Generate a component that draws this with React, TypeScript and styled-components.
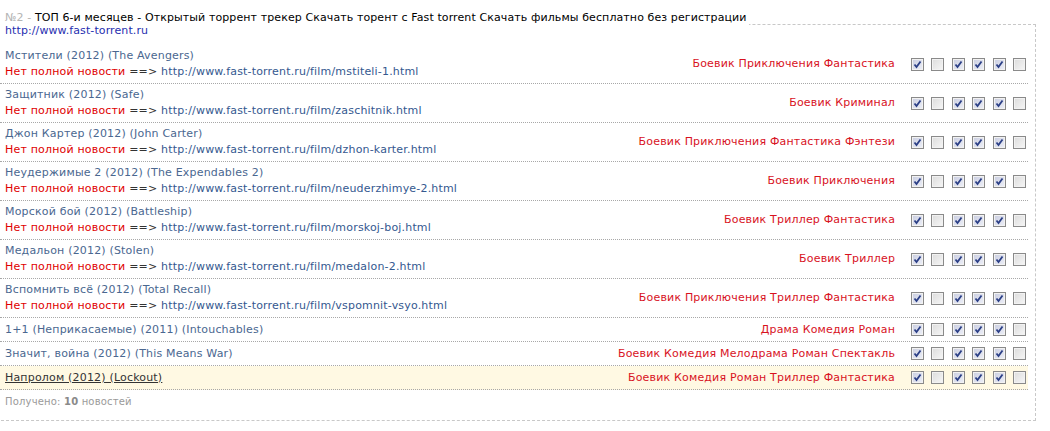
import React from 'react'
import styled, { createGlobalStyle } from 'styled-components'

interface Film {
  title: string
  url?: string
  genres: string
}

const films: Film[] = [
  { title: 'Мстители (2012) (The Avengers)', url: 'http://www.fast-torrent.ru/film/mstiteli-1.html', genres: 'Боевик Приключения Фантастика' },
  { title: 'Защитник (2012) (Safe)', url: 'http://www.fast-torrent.ru/film/zaschitnik.html', genres: 'Боевик Криминал' },
  { title: 'Джон Картер (2012) (John Carter)', url: 'http://www.fast-torrent.ru/film/dzhon-karter.html', genres: 'Боевик Приключения Фантастика Фэнтези' },
  { title: 'Неудержимые 2 (2012) (The Expendables 2)', url: 'http://www.fast-torrent.ru/film/neuderzhimye-2.html', genres: 'Боевик Приключения' },
  { title: 'Морской бой (2012) (Battleship)', url: 'http://www.fast-torrent.ru/film/morskoj-boj.html', genres: 'Боевик Триллер Фантастика' },
  { title: 'Медальон (2012) (Stolen)', url: 'http://www.fast-torrent.ru/film/medalon-2.html', genres: 'Боевик Триллер' },
  { title: 'Вспомнить всё (2012) (Total Recall)', url: 'http://www.fast-torrent.ru/film/vspomnit-vsyo.html', genres: 'Боевик Приключения Триллер Фантастика' },
  { title: '1+1 (Неприкасаемые) (2011) (Intouchables)', genres: 'Драма Комедия Роман' },
  { title: 'Значит, война (2012) (This Means War)', genres: 'Боевик Комедия Мелодрама Роман Спектакль' },
  { title: 'Напролом (2012) (Lockout)', genres: 'Боевик Комедия Роман Триллер Фантастика' },
]

const flags = [true, false, true, true, true, false]

const GlobalStyle = createGlobalStyle`
  body {
    margin: 0;
    background: #fff;
    font-family: "DejaVu Sans", Verdana, sans-serif;
    font-size: 11px;
    letter-spacing: 0.18px;
  }
`

const Fieldset = styled.fieldset`
  margin: 11px 14px 0 -4px;
  padding: 8px 7px 11px 3px;
  border: 1px dashed #c8c8c8;
  min-width: 0;
`

const Legend = styled.legend`
  padding: 0 2px 0 5px;
  font: 11px/13px "DejaVu Sans", Verdana, sans-serif;
  letter-spacing: 0.1px;
  color: #000;
`

const Num = styled.span`
  color: #b4b4b4;
`

const SiteLink = styled.a`
  color: #1f2fb0;
  text-decoration: none;
`

const List = styled.div`
  display: flex;
  flex-direction: column;
`

const Row = styled.div<{ $hover?: boolean }>`
  display: flex;
  align-items: center;
  padding: 3px 2px 3px 5px;
  border-bottom: 1px dotted #a8a8a8;
  line-height: 16px;
  background: ${p => (p.$hover ? '#fff9e3' : 'transparent')};
`

const Info = styled.div`
  flex: 1;
  min-width: 0;
`

const Title = styled.a<{ $hover?: boolean }>`
  display: block;
  color: ${p => (p.$hover ? '#333' : '#4a6790')};
  text-decoration: ${p => (p.$hover ? 'underline' : 'none')};
`

const Sub = styled.div`
  color: #333;
`

const NoNews = styled.span`
  color: #e00000;
`

const Url = styled.a`
  color: #34588f;
  text-decoration: none;
`

const Genres = styled.div`
  color: #d8121e;
  text-align: right;
  padding-right: 16px;
  white-space: nowrap;
`

const Boxes = styled.div`
  display: flex;
  gap: 7.4px;
`

const Box = styled.span<{ $checked?: boolean }>`
  box-sizing: border-box;
  width: 13px;
  height: 13px;
  margin: 2px 0;
  border: 1px solid #8a8a8a;
  display: flex;
  align-items: center;
  justify-content: center;
  background: ${p =>
    p.$checked
      ? 'linear-gradient(135deg, #c9cde0 0%, #eef0f8 100%)'
      : 'linear-gradient(135deg, #dcdcdc 0%, #f6f6f6 100%)'};
  box-shadow: inset 0 0 0 1px #f2f2f2;
`

const Footer = styled.div`
  margin-top: 5px;
  padding-left: 5px;
  font-size: 10px;
  line-height: 14px;
  color: #9a9a9a;
`

const Count = styled.b`
  color: #8a8a8a;
`

function Check({ checked }: { checked: boolean }) {
  return (
    <Box $checked={checked}>
      {checked && (
        <svg width="9" height="9" viewBox="0 0 9 9">
          <path d="M1.5 4.5 L3.5 7 L7.5 1.5" fill="none" stroke="#2b3f86" strokeWidth="1.8" />
        </svg>
      )}
    </Box>
  )
}

export default function App() {
  return (
    <>
      <GlobalStyle />
      <Fieldset>
        <Legend>
          <Num>№2 - </Num>ТОП 6-и месяцев - Открытый торрент трекер Скачать торент с Fast torrent Скачать фильмы бесплатно без регистрации
          <br />
          <SiteLink href="#">http://www.fast-torrent.ru</SiteLink>
        </Legend>
        <List>
          {films.map((f, i) => {
            const hover = i === films.length - 1
            return (
              <Row key={f.title} $hover={hover}>
                <Info>
                  <Title href="#" $hover={hover}>{f.title}</Title>
                  {f.url && (
                    <Sub>
                      <NoNews>Нет полной новости</NoNews> ==&gt; <Url href="#">{f.url}</Url>
                    </Sub>
                  )}
                </Info>
                <Genres>{f.genres}</Genres>
                <Boxes>
                  {flags.map((c, j) => (
                    <Check key={j} checked={c} />
                  ))}
                </Boxes>
              </Row>
            )
          })}
        </List>
        <Footer>
          Получено: <Count>10</Count> новостей
        </Footer>
      </Fieldset>
    </>
  )
}
